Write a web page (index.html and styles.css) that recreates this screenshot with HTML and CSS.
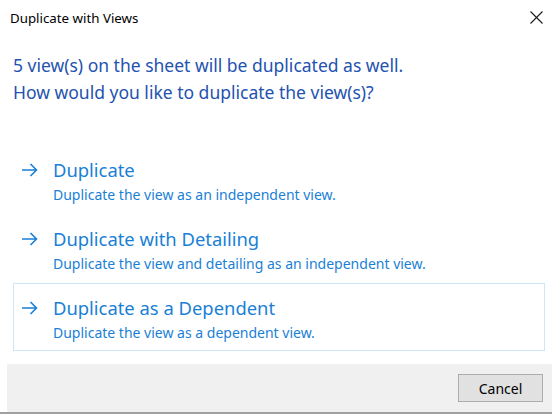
FILE: index.html
```html
<!DOCTYPE html>
<html>
<head>
<meta charset="utf-8">
<link rel="stylesheet" href="styles.css">
</head>
<body>
<div class="dialog">
  <div class="titlebar">
    <span class="title">Duplicate with Views</span>
    <svg class="close" width="13" height="13" viewBox="0 0 13 13"><path d="M0.5 0.5 L12.5 12.5 M12.5 0.5 L0.5 12.5" stroke="#1a1a1a" stroke-width="1.1" fill="none"/></svg>
  </div>
  <div class="content">
    <p class="instruction">5 view(s) on the sheet will be duplicated as well.<br>How would you like to duplicate the view(s)?</p>
    <div class="options">
      <div class="option">
        <svg class="arrow" width="17" height="14" viewBox="0 0 17 14"><path d="M1 7 H15.5 M9.5 1 L15.5 7 L9.5 13" stroke="#1a7fd6" stroke-width="1.6" fill="none"/></svg>
        <div class="text">
          <div class="opt-title">Duplicate</div>
          <div class="opt-desc">Duplicate the view as an independent view.</div>
        </div>
      </div>
      <div class="option">
        <svg class="arrow" width="17" height="14" viewBox="0 0 17 14"><path d="M1 7 H15.5 M9.5 1 L15.5 7 L9.5 13" stroke="#1a7fd6" stroke-width="1.6" fill="none"/></svg>
        <div class="text">
          <div class="opt-title">Duplicate with Detailing</div>
          <div class="opt-desc">Duplicate the view and detailing as an independent view.</div>
        </div>
      </div>
      <div class="option focused">
        <svg class="arrow" width="17" height="14" viewBox="0 0 17 14"><path d="M1 7 H15.5 M9.5 1 L15.5 7 L9.5 13" stroke="#1a7fd6" stroke-width="1.6" fill="none"/></svg>
        <div class="text">
          <div class="opt-title">Duplicate as a Dependent</div>
          <div class="opt-desc">Duplicate the view as a dependent view.</div>
        </div>
      </div>
    </div>
  </div>
  <div class="footer">
    <button class="btn">Cancel</button>
  </div>
</div>
</body>
</html>
```
FILE: styles.css
```css
html, body {
  margin: 0;
  padding: 0;
  background: #ffffff;
}
body {
  width: 552px;
  height: 414px;
  overflow: hidden;
  font-family: "Noto Sans", "Open Sans", sans-serif;
}
.dialog {
  display: flex;
  flex-direction: column;
  height: 414px;
  border-bottom: 2px solid #a0a0a0;
  box-sizing: border-box;
}
.titlebar {
  height: 36px;
  display: flex;
  align-items: center;
  justify-content: space-between;
  padding: 0 9px 0 10px;
  flex: none;
}
.title {
  font-size: 13.3px;
  color: #000;
}
.close {
  margin-top: -2px;
}
.content {
  flex: 1;
  padding: 16px 7px 0 13px;
}
.instruction {
  margin: 0;
  font-size: 17.5px;
  line-height: 27px;
  color: #2352b0;
}
.options {
  margin-top: 39px;
  display: flex;
  flex-direction: column;
  gap: 1px;
}
.option {
  display: flex;
  align-items: flex-start;
  height: 68px;
  box-sizing: border-box;
  border: 1px solid transparent;
  padding: 11px 0 0 7px;
}
.option.focused {
  border-color: #cfe5f8;
}
.arrow {
  margin-top: 6px;
  flex: none;
}
.text {
  margin-left: 15px;
}
.opt-title {
  font-size: 18.4px;
  line-height: 25px;
  color: #1a7fd6;
}
.opt-desc {
  font-size: 14px;
  line-height: 25px;
  color: #1a7fd6;
}
.footer {
  flex: none;
  height: 48px;
  margin-left: 7px;
  background: #f0f0f0;
  display: flex;
  align-items: center;
  justify-content: flex-end;
  padding-right: 9px;
}
.btn {
  width: 85px;
  height: 28px;
  background: #e1e1e1;
  border: 1px solid #adadad;
  font-family: "Noto Sans", "Open Sans", sans-serif;
  font-size: 14px;
  color: #000;
  padding: 0;
}
```
